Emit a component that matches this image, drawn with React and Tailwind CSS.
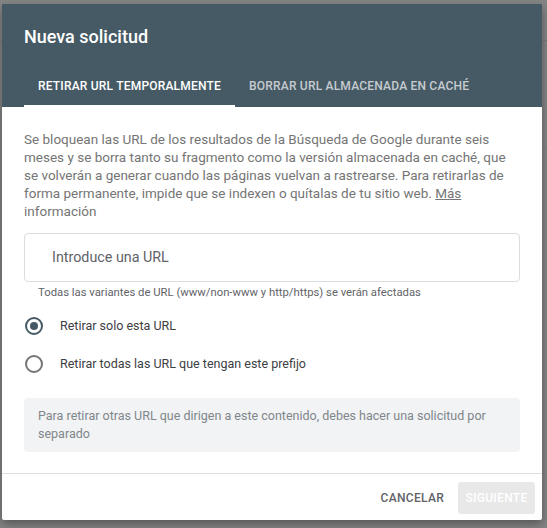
export default function App() {
  return (
    <div className="relative w-[547px] h-[528px] overflow-hidden bg-[#848484] font-['Roboto',sans-serif]">
      <div className="h-[41px] border-b border-[#7a7a7a]" />
      <div className="h-[107px] border-b border-[#7c7c7c]" />

      <div className="absolute left-[2px] top-[4px] w-[540px] h-[516px] flex flex-col bg-white rounded-[2px] shadow-[0_4px_10px_rgba(0,0,0,0.35)]">
        <div className="bg-[#465a65] px-[22px] pt-[21px]">
          <h2 className="text-[18px] leading-6 font-medium text-white">Nueva solicitud</h2>
          <div className="mt-[10px] flex h-[48px]">
            <button className="relative px-[14px] pt-[6px] text-[12px] font-medium tracking-[0.2px] text-white">
              RETIRAR URL TEMPORALMENTE
              <span className="absolute left-0 right-0 bottom-0 h-[2px] bg-white" />
            </button>
            <button className="px-[14px] pt-[6px] text-[12px] font-medium tracking-[0.2px] text-white/70">
              BORRAR URL ALMACENADA EN CACHÉ
            </button>
          </div>
        </div>

        <div className="flex-1 pl-[20px] pr-[22px] pt-[23px]">
          <p className="w-[490px] pl-[2px] text-[13.5px] leading-[18px] text-[#757575]">
            Se bloquean las URL de los resultados de la Búsqueda de Google durante seis meses y se borra tanto su fragmento como la versión almacenada en caché, que se volverán a generar cuando las páginas vuelvan a rastrearse. Para retirarlas de forma permanente, impide que se indexen o quítalas de tu sitio web. <span className="underline">Más</span> información
          </p>

          <div className="mt-[13px] ml-[2px] h-[49px] flex items-center rounded-[4px] border border-[#dadce0] pl-[27px] text-[14.3px] text-[#5f6368]">
            Introduce una URL
          </div>
          <p className="mt-[4px] pl-[16px] text-[11.3px] leading-[14px] text-[#5f6368]">
            Todas las variantes de URL (www/non-www y http/https) se verán afectadas
          </p>

          <div className="mt-[7px]">
            <label className="flex h-[38px] items-center">
              <span className="ml-[3px] flex h-[18px] w-[18px] items-center justify-center rounded-full border-2 border-[#465a65]">
                <span className="h-[8px] w-[8px] rounded-full bg-[#465a65]" />
              </span>
              <span className="ml-[17px] text-[12.5px] text-[#3c4043]">Retirar solo esta URL</span>
            </label>
            <label className="flex h-[38px] items-center">
              <span className="ml-[3px] h-[18px] w-[18px] rounded-full border-2 border-[#757575]" />
              <span className="ml-[17px] text-[12.5px] text-[#3c4043]">Retirar todas las URL que tengan este prefijo</span>
            </label>
          </div>

          <div className="mt-[15px] ml-[2px] rounded-[4px] bg-[#f1f3f4] px-[14px] py-[9px] text-[12.5px] leading-[18px] text-[#80868b]">
            Para retirar otras URL que dirigen a este contenido, debes hacer una solicitud por separado
          </div>
        </div>

        <div className="flex h-[47px] items-start justify-end gap-[6px] border-t border-[#e0e0e0] pt-[8px] pr-[7px]">
          <button className="h-[32px] px-[8px] text-[12px] font-medium tracking-[0.3px] text-[#5f6368]">CANCELAR</button>
          <button className="h-[32px] w-[77px] rounded-[3px] bg-[#e8e8e8] text-[12px] font-medium tracking-[0.3px] text-white">SIGUIENTE</button>
        </div>
      </div>
    </div>
  );
}
